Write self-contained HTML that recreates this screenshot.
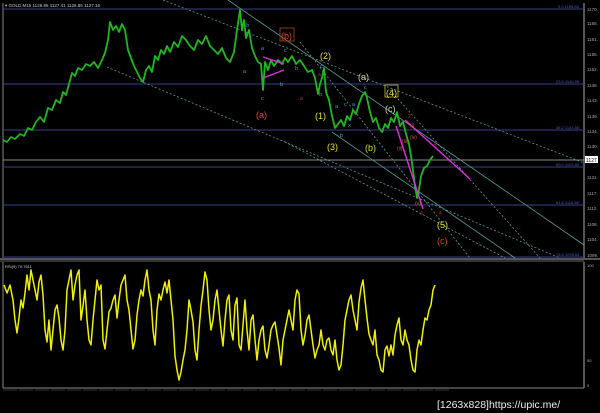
<!DOCTYPE html>
<html><head><meta charset="utf-8"><style>
html,body{margin:0;padding:0;background:#000;width:600px;height:413px;overflow:hidden}
svg{display:block}
text{font-family:"Liberation Sans",sans-serif}
</style></head><body>
<svg width="600" height="413" viewBox="0 0 600 413" xmlns="http://www.w3.org/2000/svg">
<rect width="600" height="413" fill="#000"/>
<line x1="3" y1="3" x2="3" y2="258" stroke="#888" stroke-width="1"/>
<line x1="584" y1="3" x2="584" y2="258" stroke="#aaa" stroke-width="1"/>
<line x1="0" y1="259" x2="600" y2="259" stroke="#aaa" stroke-width="1"/>
<line x1="0" y1="261" x2="584" y2="261" stroke="#666" stroke-width="1"/>
<g stroke="#3a3f8a" stroke-width="1">
<line x1="3" y1="9" x2="584" y2="9"/>
<line x1="3" y1="84" x2="584" y2="84"/>
<line x1="3" y1="130" x2="584" y2="130"/>
<line x1="3" y1="167" x2="584" y2="167"/>
<line x1="3" y1="205" x2="584" y2="205"/>
<line x1="3" y1="257" x2="584" y2="257"/>
</g>
<line x1="3" y1="160" x2="584" y2="160" stroke="#bbb" stroke-width="0.8"/>
<g fill="#4a5fbf" font-size="4">
<text x="558" y="8">0.0 1169.85</text>
<text x="556" y="83">23.6 1140.95</text>
<text x="556" y="129">38.2 1133.85</text>
<text x="556" y="166">50.0 1125.85</text>
<text x="556" y="204">61.8 1118.85</text>
<text x="556" y="256">78.6 1095.84</text>
</g>
<g fill="#aaa" font-size="4.5">
<text x="587" y="11">1170.</text><text x="587" y="25">1165.</text><text x="587" y="41">1161.</text>
<text x="587" y="56">1156.</text><text x="587" y="71">1152.</text><text x="587" y="87">1148.</text>
<text x="587" y="102">1143.</text><text x="587" y="118">1139.</text><text x="587" y="133">1134.</text>
<text x="587" y="148">1130.</text><text x="587" y="179">1121.</text><text x="587" y="195">1117.</text>
<text x="587" y="210">1112.</text><text x="587" y="226">1108.</text><text x="587" y="241">1104.</text>
<text x="587" y="257">1099.</text>
</g>
<rect x="585" y="156" width="13" height="7" fill="#fff"/>
<text x="586" y="162" font-size="5" fill="#000">1127</text>
<text x="5" y="7" font-size="4.5" fill="#ccc">▾ GOLD,M15 1126.85 1127.41 1126.85 1127.16</text>
<g fill="none" stroke-width="0.8">
<line x1="163" y1="0" x2="584" y2="163" stroke="#5a9a9a" stroke-dasharray="2,2"/>
<line x1="107" y1="67" x2="560" y2="258" stroke="#5a9a9a" stroke-dasharray="2,2"/>
<line x1="285" y1="142" x2="505" y2="258" stroke="#5a9a9a" stroke-dasharray="2,2"/>
<line x1="228" y1="0" x2="584" y2="245" stroke="#5a9a9a"/>
<line x1="332" y1="132" x2="515" y2="258" stroke="#5a9a9a"/>
<line x1="300" y1="42" x2="470" y2="258" stroke="#5a9a9a" stroke-dasharray="2,2"/>
<line x1="390" y1="90" x2="540" y2="258" stroke="#5a9a9a" stroke-dasharray="2,2"/>
</g>
<polyline fill="none" stroke="#1fb81f" stroke-width="1.8" stroke-linejoin="round" points="3,140 7,142 11,137 15,139 20,134 24,136 28,128 32,130 36,122 40,117 44,122 48,108 52,110 56,100 60,103 63,92 66,95 69,84 72,73 75,76 78,68 82,70 86,64 90,66 94,62 98,68 102,60 105,53 108,40 110,22 113,30 116,26 119,32 122,24 125,30 128,50 131,58 134,66 137,72 140,78 143,82 146,70 149,66 152,72 155,56 158,60 161,50 164,54 167,46 170,52 174,42 178,47 182,36 186,40 190,46 194,50 198,40 202,44 206,36 210,46 214,50 218,54 222,48 226,58 230,62 234,52 237,30 240,10 242,30 244,20 246,38 249,30 252,48 255,56 258,62 261,64 263,90 265,62 268,70 271,60 274,66 278,60 282,64 285,58 288,62 292,56 296,64 300,60 304,66 308,72 312,70 315,78 318,94 320,84 322,78 324,68 326,92 329,100 332,116 335,128 338,124 341,120 344,126 347,116 350,120 353,110 356,114 359,104 362,96 365,92 367,98 370,112 373,122 376,118 379,128 382,132 385,124 388,128 391,118 394,122 397,112 400,126 403,122 406,134 409,144 411,156 413,170 415,186 417,198 419,190 421,176 424,168 427,166 430,160 433,156"/>
<g stroke="#e030e0" stroke-width="1.4" fill="none">
<line x1="263" y1="57" x2="284" y2="64"/>
<line x1="263" y1="78" x2="284" y2="70"/>
<line x1="405" y1="120" x2="470" y2="179"/>
<line x1="396" y1="126" x2="423" y2="209"/>
</g>
<g font-size="9">
<rect x="280" y="28" width="14" height="13" fill="none" stroke="#b04020" stroke-width="0.8"/>
<text x="281" y="39" fill="#e04020">(b)</text>
<text x="256" y="118" fill="#e05020">(a)</text>
<text x="320" y="59" fill="#e8e030">(2)</text>
<text x="315" y="119" fill="#e8e030">(1)</text>
<text x="327" y="150" fill="#e8e030">(3)</text>
<text x="358" y="80" fill="#d8d8a0">(a)</text>
<rect x="385" y="85" width="13" height="12" fill="none" stroke="#c8c030" stroke-width="0.8"/>
<text x="386" y="96" fill="#e8e030">(4)</text>
<text x="385" y="112" fill="#c8e0a0">(c)</text>
<text x="365" y="151" fill="#c8e030">(b)</text>
<text x="437" y="228" fill="#e8e030">(5)</text>
<text x="437" y="244" fill="#e04020">(c)</text>
</g>
<g font-size="5.5" fill="#3aa0d0">
<text x="246" y="27">b</text><text x="261" y="50">a</text><text x="243" y="73">a</text>
<text x="261" y="100">c</text><text x="280" y="86">b</text><text x="284" y="52">c</text>
<text x="295" y="70">b</text><text x="320" y="68">c</text><text x="319" y="96">b</text>
<text x="335" y="108">a</text><text x="344" y="106">c</text><text x="352" y="106">a</text>
<text x="348" y="127">x</text><text x="340" y="137">b</text><text x="364" y="89">c</text>
</g>
<g font-size="5" fill="#c03080">
<text x="300" y="100">a</text><text x="318" y="76">a</text>
</g>
<g font-size="5" fill="#d06030">
<text x="397" y="150">(ii)</text><text x="402" y="143">(iii)</text><text x="410" y="139">(iv)</text>
<text x="415" y="205">(v)</text><text x="410" y="127">(i)</text>
</g>
<g font-size="5" fill="#d02020">
<text x="420" y="215">3</text><text x="439" y="215">4</text><text x="434" y="146">4</text><text x="408" y="118">2</text>
</g>
<line x1="3" y1="262" x2="3" y2="388" stroke="#888"/>
<line x1="584" y1="262" x2="584" y2="388" stroke="#aaa"/>
<line x1="3" y1="388" x2="584" y2="388" stroke="#888"/>
<text x="5" y="268" font-size="4" fill="#ccc">RSI(9) 79.7611</text>
<g fill="#aaa" font-size="4"><text x="587" y="267">100</text><text x="587" y="362">50</text><text x="587" y="387">0</text></g>
<polyline fill="none" stroke="#f0f000" stroke-width="1.5" stroke-linejoin="round" points="4,285 7,293 10,285 13,300 15,320 17,333 19,318 21,300 23,308 25,293 27,275 29,290 31,270 33,280 35,290 37,300 39,282 41,275 43,295 45,330 47,342 49,320 51,350 53,330 55,310 57,305 59,318 61,340 63,350 65,330 67,290 69,280 71,270 73,300 75,285 77,275 79,270 81,320 83,306 85,290 87,320 89,340 91,345 93,320 95,300 97,280 99,290 101,285 103,340 105,349 107,330 109,312 111,308 113,300 115,295 117,318 119,300 121,285 123,280 125,275 127,300 129,310 131,330 133,349 135,340 137,315 139,300 141,290 143,296 145,280 147,270 149,290 151,300 153,330 155,345 157,310 159,294 161,300 163,290 165,282 167,293 169,280 171,300 173,320 175,356 177,370 179,380 181,372 183,360 185,350 187,330 189,300 191,310 193,322 195,350 197,360 199,330 201,306 203,290 205,272 207,280 209,310 211,330 213,320 215,300 217,290 219,310 221,330 223,346 225,320 227,300 229,295 231,330 233,340 235,305 237,298 239,345 241,350 243,325 245,300 247,330 249,350 251,320 253,315 255,340 257,360 259,340 261,330 263,326 265,350 267,358 269,345 271,330 273,325 275,322 277,335 279,348 281,365 283,340 285,330 287,320 289,310 291,320 293,330 295,300 297,290 299,294 301,330 303,345 305,335 307,320 309,315 311,330 313,345 315,358 317,350 319,345 321,330 323,345 325,350 327,340 329,338 331,350 333,355 335,340 337,360 339,370 341,365 343,345 345,320 347,310 349,300 351,295 353,310 355,320 357,330 359,302 361,288 363,280 365,300 367,318 369,334 371,340 373,345 375,330 377,355 379,360 381,370 383,372 385,350 387,346 389,356 391,345 393,355 395,335 397,325 399,318 401,340 403,345 405,330 407,340 409,345 411,360 413,370 415,372 417,350 419,340 421,345 423,330 425,318 427,320 429,310 431,305 433,290 435,285"/>
<line x1="3" y1="390" x2="450" y2="390" stroke="#666" stroke-width="0.6" stroke-dasharray="14,2"/>
<text x="437" y="408" font-size="10.5" fill="#eee" font-family="Liberation Mono,monospace">[1263x828]https://upic.me/</text>
</svg>
</body></html>
